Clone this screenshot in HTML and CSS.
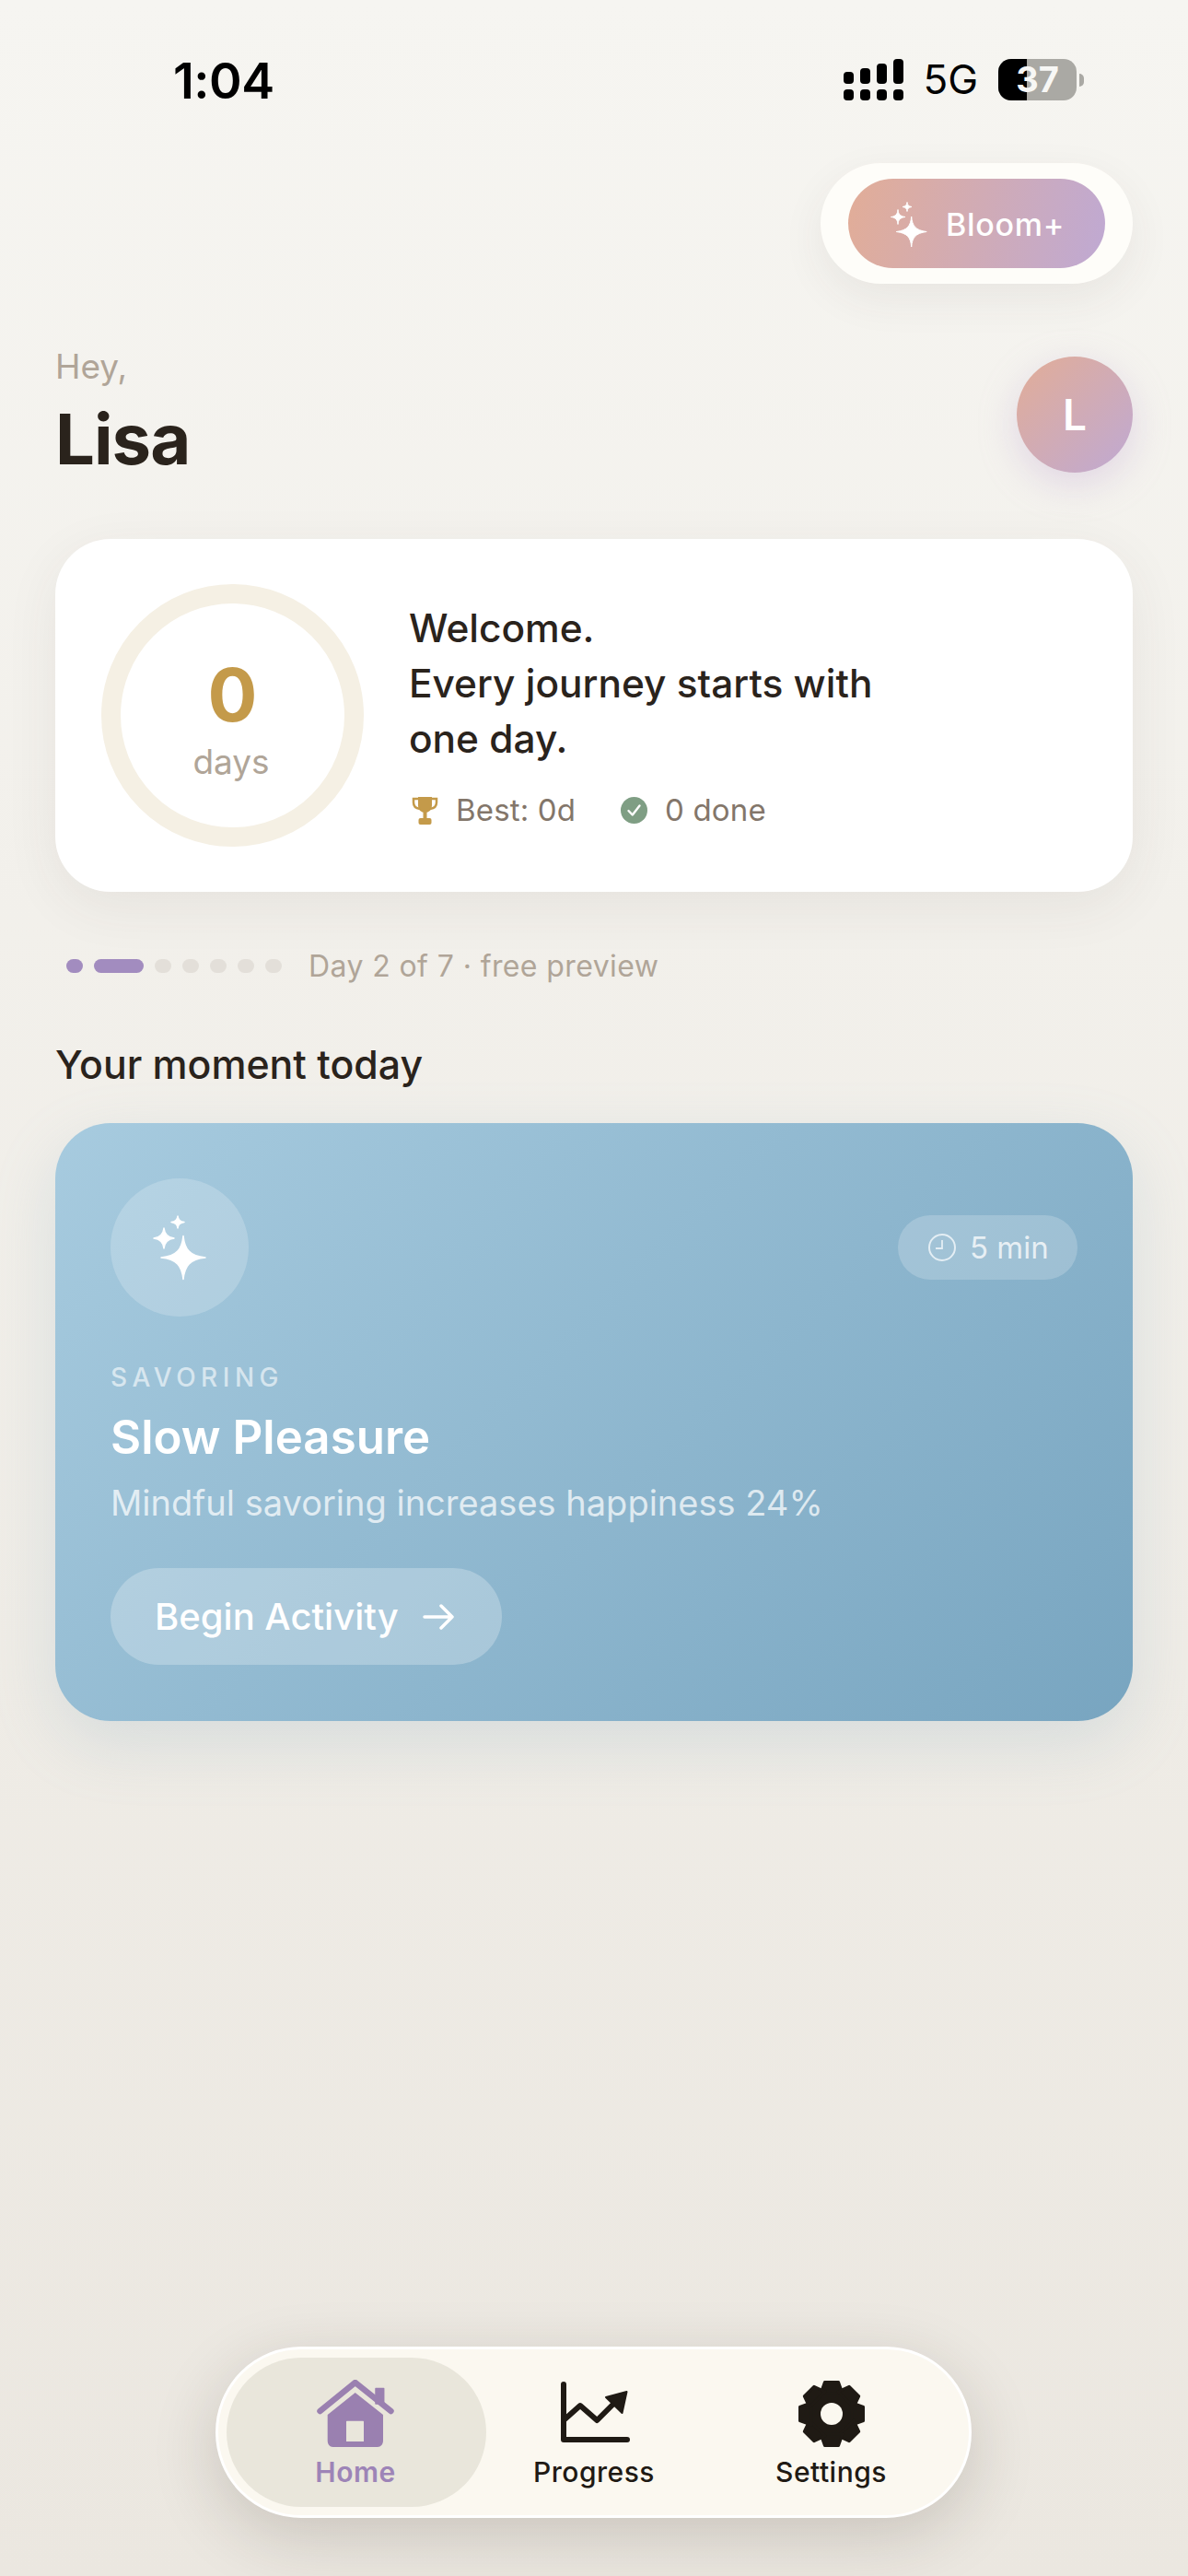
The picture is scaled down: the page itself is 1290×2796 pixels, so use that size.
FILE: index.html
```html
<!DOCTYPE html>
<html lang="en">
<head>
    <meta charset="UTF-8">
    <title>Bloom</title>
    <link rel="stylesheet" href="styles.css">
</head>
<body>
<div class="page">
    <div class="status">
        <span class="time">1:04</span>
        <div class="status-right">
            <svg class="signal" width="65" height="45" viewBox="0 0 65 45">
                <rect x="0" y="33" width="11" height="12" rx="4"/><rect x="18" y="33" width="11" height="12" rx="4"/>
                <rect x="36" y="33" width="11" height="12" rx="4"/><rect x="54" y="33" width="11" height="12" rx="4"/>
                <rect x="0" y="14" width="11" height="13" rx="4"/><rect x="18" y="10" width="11" height="17" rx="4"/>
                <rect x="36" y="5" width="11" height="22" rx="4"/><rect x="54" y="0" width="11" height="27" rx="4"/>
            </svg>
            <span class="net">5G</span>
            <div class="battery"><i class="battery-fill"></i><span class="battery-num">37</span></div>
            <i class="battery-nub"></i>
        </div>
    </div>

    <div class="top-action">
        <div class="bloom-wrap">
            <div class="bloom">
                <svg width="42" height="50" viewBox="0 0 42 50" fill="#fff" stroke="#fff" stroke-width="1" stroke-linejoin="round">
                    <path d="M22.700 17C23.500 27 27 32 39.200 33.500C27 35 23.500 40 22.700 50C21.900 40 18.400 35 6.200 33.500C18.400 32 21.900 27 22.700 17Z"/>
                    <path d="M8 9.500C8.400 14 10 16.800 16 17.500C10 18.200 8.400 21 8 25.500C7.600 21 6 18.200 0.500 17.500C6 16.800 7.600 14 8 9.500Z"/>
                    <path d="M18 1.500C18.200 4.500 19.500 6 23 6.500C19.500 7 18.200 8.500 18 11.500C17.800 8.500 16.500 7 13 6.500C16.500 6 17.800 4.500 18 1.500Z"/>
                </svg>
                <span>Bloom+</span>
            </div>
        </div>
    </div>

    <div class="hello">
        <div>
            <div class="hey">Hey,</div>
            <div class="name">Lisa</div>
        </div>
        <div class="avatar">L</div>
    </div>

    <div class="streak">
        <div class="ring">
            <div class="ring-num">0</div>
            <div class="ring-label">days</div>
        </div>
        <div class="streak-body">
            <div class="streak-text">Welcome.<br>Every journey starts with<br>one day.</div>
            <div class="stats">
                <div class="stat">
                    <svg width="29" height="31" viewBox="0 0 29 31">
                        <path d="M7 1H22V10C22 15 18.500 18 14.500 18C10.500 18 7 15 7 10Z" fill="#c49a4a"/>
                        <path d="M7 3H2V7C2 11 5 13.500 9 14M22 3H27V7C27 11 24 13.500 20 14" fill="none" stroke="#c49a4a" stroke-width="2.500"/>
                        <path d="M12.500 17H16.500V24H12.500Z" fill="#c49a4a"/>
                        <rect x="7.500" y="24" width="14" height="7" rx="2" fill="#c49a4a"/>
                    </svg>
                    <span>Best: 0d</span>
                </div>
                <div class="stat">
                    <svg width="29" height="29" viewBox="0 0 29 29">
                        <circle cx="14.500" cy="14.500" r="14.500" fill="#7f9e84"/>
                        <path d="M8.500 15L12.800 19.500L20.500 9.500" fill="none" stroke="#fff" stroke-width="2.400" stroke-linecap="round" stroke-linejoin="round"/>
                    </svg>
                    <span>0 done</span>
                </div>
            </div>
        </div>
    </div>

    <div class="preview">
        <div class="dots">
            <i class="dot on"></i><i class="dot on wide"></i><i class="dot"></i><i class="dot"></i><i class="dot"></i><i class="dot"></i><i class="dot"></i>
        </div>
        <span>Day 2 of 7 · free preview</span>
    </div>

    <h2 class="section-title">Your moment today</h2>

    <div class="activity">
        <div class="activity-top">
            <div class="activity-icon">
                <svg width="80" height="80" viewBox="0 0 80 80" fill="#fff" stroke="#fff" stroke-width="1.500" stroke-linejoin="round">
                    <path d="M44 27.500C45.500 42 51 49.500 68 51C51 52.500 45.500 60 44 74.500C42.500 60 37 52.500 20 51C37 49.500 42.500 42 44 27.500Z"/>
                    <path d="M23 19C23.600 25 26 29 34 30C26 31 23.600 35 23 41C22.400 35 20 31 12 30C20 29 22.400 25 23 19Z"/>
                    <path d="M38 6C38.300 9.500 40 11.800 45 12.500C40 13.200 38.300 15.500 38 19C37.700 15.500 36 13.200 31 12.500C36 11.800 37.700 9.500 38 6Z"/>
                </svg>
            </div>
            <div class="duration">
                <svg width="30" height="30" viewBox="0 0 30 30" fill="none" stroke="#e4eef4" stroke-width="2">
                    <circle cx="15" cy="15" r="14"/>
                    <path d="M15 7V16H8" stroke-width="1.800"/>
                </svg>
                <span>5 min</span>
            </div>
        </div>
        <div class="eyebrow">SAVORING</div>
        <div class="activity-title">Slow Pleasure</div>
        <div class="activity-sub">Mindful savoring increases happiness 24%</div>
        <div class="begin">
            <span>Begin Activity</span>
            <svg width="34" height="30" viewBox="0 0 34 30" fill="none" stroke="#fff" stroke-width="3.500" stroke-linecap="round" stroke-linejoin="round">
                <path d="M2 15H32M20 3L32 15L20 27"/>
            </svg>
        </div>
    </div>

    <div class="tabbar">
        <div class="tab active">
            <svg width="84" height="74" viewBox="0 0 84 74">
                <path d="M64 9.500H72.700V26H64Z" fill="#9a80b0" stroke="#9a80b0" stroke-width="1.500" stroke-linejoin="round"/>
                <path d="M3.500 34L41.700 3L80.500 34" fill="none" stroke="#9a80b0" stroke-width="6.500" stroke-linecap="round" stroke-linejoin="round"/>
                <path fill-rule="evenodd" fill="#9a80b0" d="M41.700 14L72 38V66C72 70 69.500 73 66 73H17.500C14 73 11.700 70 11.700 66V38ZM33 44.700C32.400 44.700 32 45.100 32 45.700V67H51V45.700C51 45.100 50.600 44.700 50 44.700Z"/>
            </svg>
            <span>Home</span>
        </div>
        <div class="tab">
            <svg width="78" height="74" viewBox="0 0 78 74" fill="none" stroke="#1f1a14" stroke-width="6" stroke-linecap="round" stroke-linejoin="round">
                <path d="M6 5V65H75"/>
                <path d="M6 44L24 28L42.300 44L61.300 25" stroke-linecap="butt"/>
                <path d="M52 19L74.500 13L69.500 36Z" fill="#1f1a14" stroke-width="2"/>
            </svg>
            <span>Progress</span>
        </div>
        <div class="tab">
            <svg width="80" height="74" viewBox="-40 -37 80 74" fill="#1f1a14" stroke="#1f1a14" stroke-width="3" stroke-linejoin="round">
                <circle r="27" stroke="none"/>
                <path id="tooth" d="M-7.500 -34.500H7.500L12 -22H-12Z"/>
                <use href="#tooth" transform="rotate(45)"/><use href="#tooth" transform="rotate(90)"/><use href="#tooth" transform="rotate(135)"/>
                <use href="#tooth" transform="rotate(180)"/><use href="#tooth" transform="rotate(225)"/><use href="#tooth" transform="rotate(270)"/><use href="#tooth" transform="rotate(315)"/>
                <circle r="12" fill="#fbf8f0" stroke="none"/>
            </svg>
            <span>Settings</span>
        </div>
    </div>
</div>
</body>
</html>
```

FILE: styles.css
```css
*{
    margin:0;
    padding:0;
    box-sizing: border-box;
}
html,body{
    width: 1290px;
    height: 2796px;
    overflow: hidden;
}
body{
    font-family: Inter, "Liberation Sans", sans-serif;
    color: #2a231c;
}
.page{
    height: 2796px;
    padding: 0 60px;
    display: flex;
    flex-direction: column;
    background: linear-gradient(180deg, #f6f5f1 0%, #ebe7e0 100%);
}

/* status bar */
.status{
    height: 125px;
    margin: 0 53px 0 128px;
    padding-top: 64px;
    display: flex;
    justify-content: space-between;
    align-items: flex-start;
    color: #000;
}
.time{
    margin-top: 1px;
    font-size: 54px;
    line-height: 45px;
    font-weight: 600;
    letter-spacing: -.5px;
}
.status-right{
    display: flex;
    align-items: center;
    height: 45px;
}
.signal{
    fill: #000;
    margin-right: 21px;
}
.net{
    font-size: 44px;
    line-height: 45px;
    font-weight: 400;
    margin-right: 22px;
}
.battery{
    position: relative;
    width: 85px;
    height: 45px;
    border-radius: 14px;
    background: #aaa9a4;
    overflow: hidden;
    text-align: center;
}
.battery-fill{
    position: absolute;
    left: 0;
    top: 0;
    bottom: 0;
    width: 31px;
    background: #000;
}
.battery-num{
    position: relative;
    font-size: 38px;
    line-height: 45px;
    font-weight: 700;
    color: #f7f7f5;
}
.battery-nub{
    width: 5px;
    height: 14px;
    margin-left: 3px;
    background: #aaa9a4;
    border-radius: 0 7px 7px 0;
}

/* bloom button */
.top-action{
    margin-top: 52px;
    display: flex;
    justify-content: flex-end;
}
.bloom-wrap{
    padding: 17px 30px;
    background: #fefdf9;
    border-radius: 66px;
    box-shadow: 0 16px 48px rgba(70,60,50,.07);
}
.bloom{
    width: 279px;
    height: 97px;
    padding-left: 46px;
    display: flex;
    align-items: center;
    gap: 18px;
    border-radius: 49px;
    background: linear-gradient(105deg, #e2ad97 0%, #bfa9d3 100%);
    color: #fff;
    font-size: 34px;
    font-weight: 500;
    letter-spacing: .7px;
}
.bloom span{
    padding-top: 2px;
}

/* greeting */
.hello{
    margin-top: 79px;
    height: 126px;
    display: flex;
    justify-content: space-between;
    align-items: flex-start;
}
.hey{
    margin-top: -12px;
    font-size: 37px;
    line-height: 46px;
    color: #b0a598;
}
.name{
    margin-top: 11px;
    font-size: 76px;
    line-height: 88px;
    font-weight: 700;
    letter-spacing: -1px;
}
.avatar{
    width: 126px;
    height: 126px;
    border-radius: 50%;
    display: flex;
    align-items: center;
    justify-content: center;
    background: linear-gradient(135deg, #e2ad97 0%, #bfa9d3 100%);
    box-shadow: 0 12px 40px rgba(190,160,210,.35);
    color: #fff;
    font-size: 46px;
    font-weight: 600;
}

/* streak card */
.streak{
    margin-top: 72px;
    height: 383px;
    padding: 49px 50px;
    display: flex;
    gap: 49px;
    background: #fff;
    border-radius: 60px;
    box-shadow: 0 16px 60px rgba(70,60,50,.07);
}
.ring{
    width: 285px;
    height: 285px;
    flex: none;
    border: 21px solid #f5f0e4;
    border-radius: 50%;
    display: flex;
    flex-direction: column;
    align-items: center;
}
.ring-num{
    margin-top: 57px;
    font-size: 80px;
    line-height: 84px;
    font-weight: 700;
    color: #c49a4a;
}
.ring-label{
    margin: 9px 3px 0 0;
    font-size: 37px;
    line-height: 44px;
    color: #b0a598;
}
.streak-text{
    margin-top: 18px;
    font-size: 42.4px;
    line-height: 60px;
    font-weight: 500;
}
.stats{
    margin-top: 27px;
    padding-left: 3px;
    display: flex;
    gap: 49px;
    color: #83766a;
    font-size: 33px;
    line-height: 40px;
    letter-spacing: .15px;
}
.stat{
    display: flex;
    align-items: center;
    gap: 19px;
}

/* preview dots */
.preview{
    margin-top: 56px;
    height: 48px;
    padding-left: 12px;
    display: flex;
    align-items: center;
    gap: 29px;
    color: #b0a598;
    font-size: 32px;
    letter-spacing: .4px;
}
.dots{
    display: flex;
    gap: 12px;
}
.dot{
    width: 18px;
    height: 15px;
    border-radius: 8px;
    background: #e3dfd9;
}
.dot.on{
    background: #a28cbf;
}
.dot.wide{
    width: 54px;
}

.section-title{
    margin-top: 56px;
    font-size: 42.8px;
    line-height: 56px;
    font-weight: 500;
}

/* activity card */
.activity{
    margin-top: 35px;
    height: 649px;
    padding: 60px;
    border-radius: 60px;
    background: linear-gradient(135deg, #a7cbdf 0%, #78a5c0 100%);
    box-shadow: 0 24px 70px rgba(120,160,185,.2);
    color: #fff;
}
.activity-top{
    display: flex;
    justify-content: space-between;
    align-items: center;
}
.activity-icon{
    width: 150px;
    height: 150px;
    border-radius: 50%;
    background: rgba(255,255,255,.2);
    display: flex;
    align-items: center;
    justify-content: center;
}
.duration{
    height: 70px;
    width: 195px;
    padding-left: 33px;
    display: flex;
    align-items: center;
    gap: 15px;
    border-radius: 35px;
    background: rgba(255,255,255,.2);
    color: rgba(255,255,255,.75);
    font-size: 33px;
}
.eyebrow{
    margin-top: 49px;
    font-size: 28px;
    line-height: 34px;
    font-weight: 500;
    letter-spacing: 5.5px;
    color: rgba(255,255,255,.6);
}
.activity-title{
    margin-top: 17px;
    font-size: 51px;
    line-height: 62px;
    font-weight: 600;
}
.activity-sub{
    margin-top: 16px;
    font-size: 38px;
    line-height: 48px;
    color: rgba(255,255,255,.72);
}
.begin{
    margin-top: 47px;
    width: 425px;
    height: 105px;
    padding-left: 48px;
    display: flex;
    align-items: center;
    gap: 26px;
    border-radius: 53px;
    background: rgba(255,255,255,.25);
    font-size: 40px;
    font-weight: 500;
}

/* tab bar */
.tabbar{
    margin-top: auto;
    margin-bottom: 63px;
    align-self: center;
    margin-left: -1px;
    width: 821px;
    height: 186px;
    padding: 9px;
    display: grid;
    grid-template-columns: 282px 234px 1fr;
    border: 3px solid #fff;
    border-radius: 93px;
    background: #fbf8f0;
    box-shadow: 0 20px 70px rgba(50,40,30,.18);
}
.tab{
    padding-top: 24px;
    display: flex;
    flex-direction: column;
    align-items: center;
    gap: 8px;
    color: #1f1a14;
    font-size: 30px;
    line-height: 36px;
    font-weight: 500;
    letter-spacing: .5px;
}
.tab.active{
    padding-right: 2px;
    background: #e9e6db;
    border-radius: 81px;
    color: #9d84b7;
    font-weight: 600;
}
```
